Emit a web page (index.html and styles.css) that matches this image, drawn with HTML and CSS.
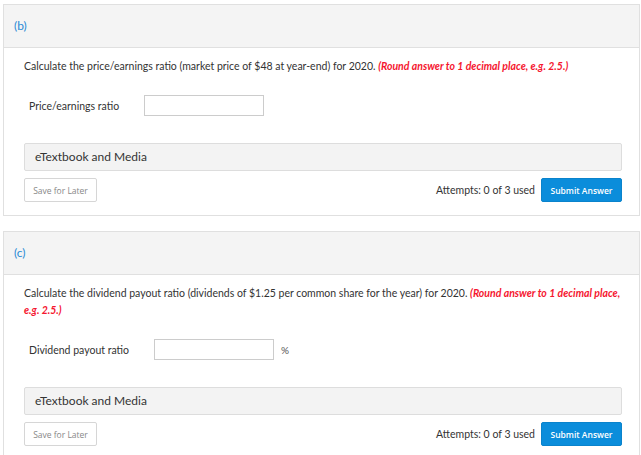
FILE: index.html
```html
<!DOCTYPE html>
<html>
<head>
<meta charset="utf-8">
<link rel="stylesheet" href="styles.css">
</head>
<body>
<div class="page">
  <section class="panel">
    <div class="panel-head">(b)</div>
    <div class="panel-body">
      <p class="question">Calculate the price/earnings ratio (market price of $48 at year-end) for 2020. <em class="hint">(Round answer to 1 decimal place, e.g. 2.5.)</em></p>
      <div class="answer-row">
        <label class="answer-label">Price/earnings ratio</label>
        <input class="answer-input" type="text">
      </div>
      <div class="media-bar">eTextbook and Media</div>
      <div class="actions">
        <button class="btn-save">Save for Later</button>
        <div class="submit-group">
          <span class="attempts">Attempts: 0 of 3 used</span>
          <button class="btn-submit">Submit Answer</button>
        </div>
      </div>
    </div>
  </section>
  <section class="panel">
    <div class="panel-head">(c)</div>
    <div class="panel-body">
      <p class="question">Calculate the dividend payout ratio (dividends of $1.25 per common share for the year) for 2020. <em class="hint">(Round answer to 1 decimal place, e.g. 2.5.)</em></p>
      <div class="answer-row">
        <label class="answer-label">Dividend payout ratio</label>
        <input class="answer-input" type="text">
        <span class="unit">%</span>
      </div>
      <div class="media-bar">eTextbook and Media</div>
      <div class="actions">
        <button class="btn-save">Save for Later</button>
        <div class="submit-group">
          <span class="attempts">Attempts: 0 of 3 used</span>
          <button class="btn-submit">Submit Answer</button>
        </div>
      </div>
    </div>
  </section>
</div>
</body>
</html>
```
FILE: styles.css
```css
html, body {
  margin: 0;
  padding: 0;
  background: #ffffff;
}
body {
  font-family: Lato, "Liberation Sans", sans-serif;
  color: #333333;
  overflow: hidden;
}
.page {
  padding: 4px 1px 0 3px;
}
.panel {
  border: 1px solid #e0e0e0;
  margin-bottom: 15px;
  background: #fff;
}
.panel-head {
  background: #f4f4f4;
  border-bottom: 1px solid #e0e0e0;
  height: 42px;
  line-height: 42px;
  padding-left: 10px;
  color: #2a8ad4;
  font-size: 12px;
}
.panel-body {
  padding: 10px 17px 13px 20px;
}
.question {
  margin: 0;
  font-size: 10.5px;
  line-height: 17px;
  color: #333;
}
.hint {
  color: #f5162f;
  font-weight: bold;
  font-style: italic;
}
.answer-row {
  display: flex;
  align-items: center;
  margin-top: 20px;
  padding-left: 5px;
}
.answer-label {
  font-size: 10.5px;
  margin-right: 25px;
}
.answer-input {
  width: 120px;
  height: 21px;
  box-sizing: border-box;
  border: 1px solid #cccccc;
  border-radius: 0;
  margin: 0;
  padding: 0;
}
.unit {
  margin-left: 7px;
  font-size: 10px;
  color: #555;
}
.media-bar {
  margin-top: 27px;
  height: 28px;
  box-sizing: border-box;
  line-height: 26px;
  background: #f3f3f3;
  border: 1px solid #dddddd;
  border-radius: 2px;
  padding-left: 10px;
  font-size: 12px;
  color: #333;
}
.actions {
  display: flex;
  justify-content: space-between;
  align-items: center;
  margin-top: 7px;
}
.btn-save {
  height: 24px;
  width: 73px;
  box-sizing: border-box;
  background: #fff;
  border: 1px solid #d6d6d6;
  border-radius: 2px;
  font-family: "Open Sans", sans-serif;
  font-size: 8.5px;
  color: #888;
  padding: 0;
}
.submit-group {
  display: flex;
  align-items: center;
}
.attempts {
  font-size: 10.5px;
  color: #333;
  margin-right: 6px;
}
.btn-submit {
  height: 24px;
  width: 81px;
  box-sizing: border-box;
  background: #0b8ddb;
  border: 1px solid #0a83cc;
  border-radius: 2px;
  color: #fff;
  font-family: "Open Sans", sans-serif;
  font-weight: 600;
  font-size: 8.5px;
  padding: 0;
}
```
